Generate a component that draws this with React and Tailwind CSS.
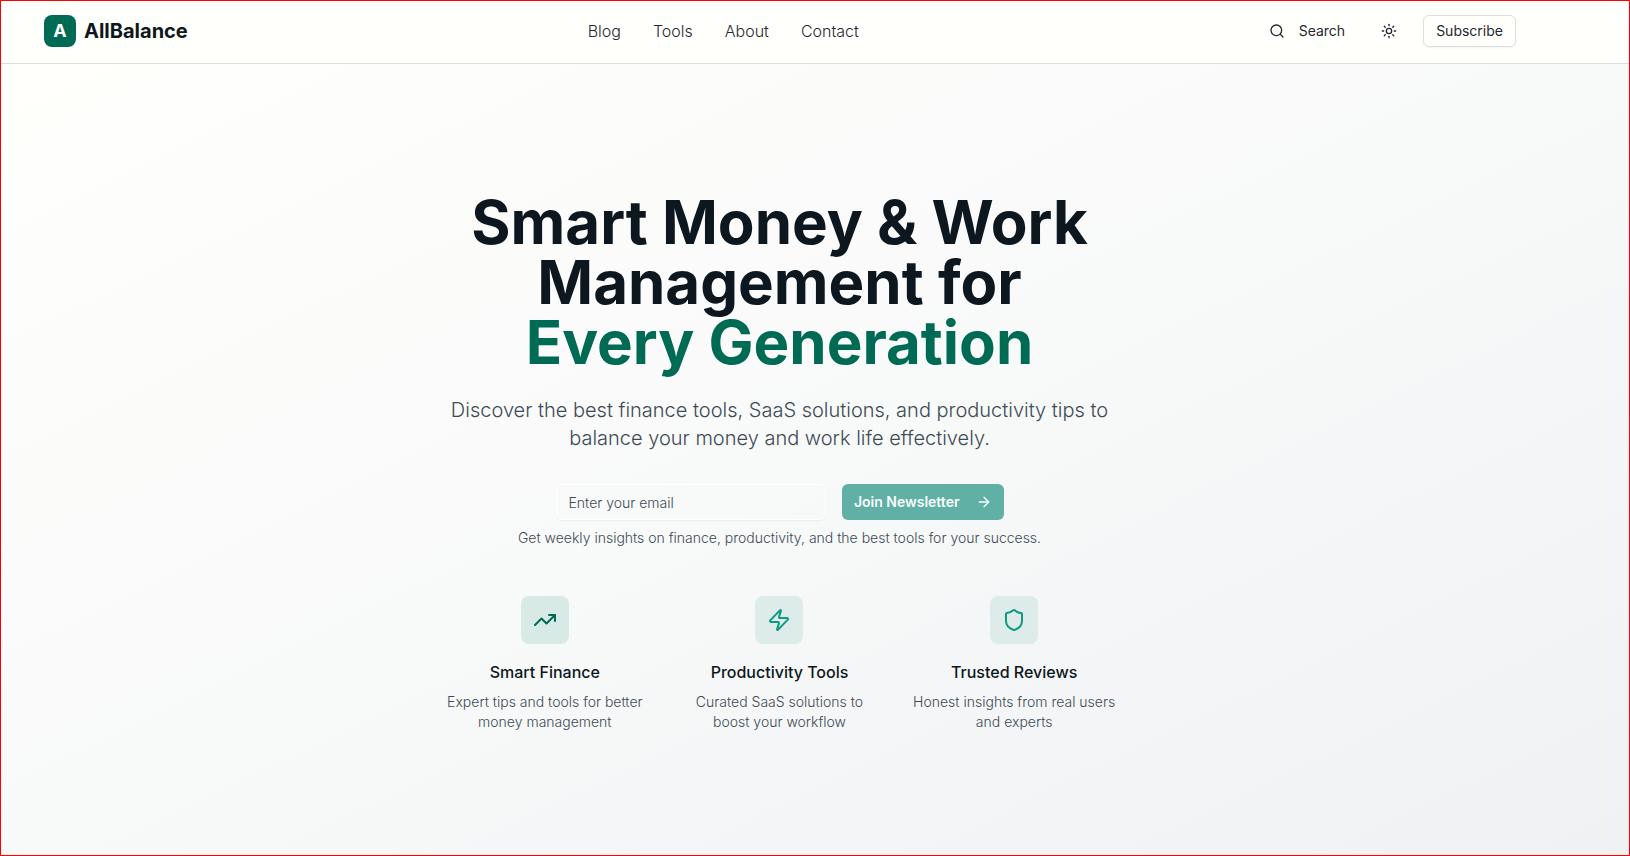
import { ArrowRight, Search, Shield, Sun, TrendingUp, Zap } from "lucide-react";

const links = ["Blog", "Tools", "About", "Contact"];

const features = [
  {
    title: "Smart Finance",
    text: "Expert tips and tools for better money management",
    Icon: TrendingUp,
    tile: "bg-[#d8eae6] text-[#006b54]",
  },
  {
    title: "Productivity Tools",
    text: "Curated SaaS solutions to boost your workflow",
    Icon: Zap,
    tile: "bg-[#ddece9] text-[#0d9a80]",
  },
  {
    title: "Trusted Reviews",
    text: "Honest insights from real users and experts",
    Icon: Shield,
    tile: "bg-[#ddece9] text-[#0d9a80]",
  },
];

function Header() {
  return (
    <header className="h-16 border-b border-[#dcdddd] bg-[#fffffc] pr-[70px] pb-px">
      <div className="mx-auto flex h-full max-w-[1536px] items-center justify-between px-8">
        <a href="#" className="flex items-center gap-2">
          <span className="flex size-8 items-center justify-center rounded-lg bg-[#006b54] text-lg font-bold text-white">
            A
          </span>
          <span className="text-xl font-bold text-[#0d1720]">AllBalance</span>
        </a>
        <nav className="flex items-center gap-8">
          {links.map((link) => (
            <a key={link} href="#" className="text-base font-light text-[#1f2933]">
              {link}
            </a>
          ))}
        </nav>
        <div className="flex items-center gap-4">
          <button className="flex h-8 items-center gap-3.5 rounded-md px-2.5 text-sm text-[#1f2933]">
            <Search size={16} />
            Search
          </button>
          <button aria-label="Toggle theme" className="flex h-8 w-9 items-center justify-center rounded-md text-[#1f2933]">
            <Sun size={16} />
          </button>
          <button className="h-8 rounded-md border border-[#dcdee0] px-3 text-sm text-[#1f2933] shadow-xs">
            Subscribe
          </button>
        </div>
      </div>
    </header>
  );
}

export default function App() {
  return (
    <div className="flex min-h-screen flex-col font-['Inter',sans-serif] outline outline-1 -outline-offset-1 outline-[#ff0000]">
      <Header />
      <main className="flex-1 bg-linear-to-br from-[#fffffc] via-[#f8f9f9] to-[#eff1f3] pt-32 pr-[103px] pb-24 pl-8 text-center">
        <h1 className="text-6xl leading-none font-bold text-[#0d1720]">
          Smart Money &amp; Work
          <br />
          Management for
          <span className="block text-[#006b54]">Every Generation</span>
        </h1>
        <p className="mx-auto mt-6 max-w-2xl text-xl leading-7 font-light text-[#3d4b55]">
          Discover the best finance tools, SaaS solutions, and productivity tips to balance your money and work life
          effectively.
        </p>
        <form className="mx-auto mt-8 flex max-w-md gap-4">
          <input
            type="email"
            aria-label="Email address"
            placeholder="Enter your email"
            className="h-9 min-w-0 flex-1 rounded-md border border-[#fffffd] px-3 text-sm font-light shadow-xs placeholder:text-[#3d4b55]"
          />
          <button
            type="button"
            disabled
            className="flex h-9 items-center gap-4 rounded-md bg-[#60b0a5] px-3 text-sm font-semibold text-[#fafdfc]"
          >
            Join Newsletter
            <ArrowRight size={16} />
          </button>
        </form>
        <p className="mt-2 text-sm font-light text-[#3d4b55]">
          Get weekly insights on finance, productivity, and the best tools for your success.
        </p>
        <div className="mx-auto mt-12 grid max-w-2xl grid-cols-3 gap-8">
          {features.map(({ title, text, Icon, tile }) => (
            <div key={title} className="flex flex-col items-center">
              <div className={`flex size-12 items-center justify-center rounded-lg ${tile}`}>
                <Icon size={24} />
              </div>
              <h3 className="mt-4 text-base font-medium text-[#0d1720]">{title}</h3>
              <p className="mt-2 text-sm font-light text-[#3d4b55]">{text}</p>
            </div>
          ))}
        </div>
      </main>
    </div>
  );
}
